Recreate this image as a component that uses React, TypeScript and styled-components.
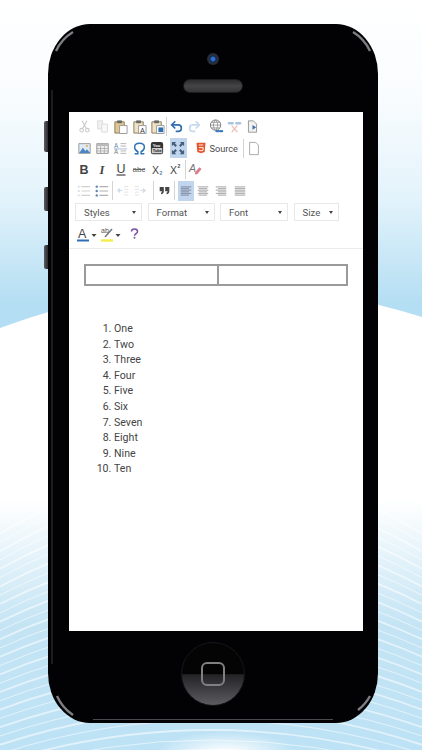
import { FC, ReactNode } from 'react';
import styled, { createGlobalStyle } from 'styled-components';

const GlobalStyle = createGlobalStyle`
  html, body { margin: 0; padding: 0; width: 422px; height: 750px; overflow: hidden; background: #fff; }
  * { box-sizing: border-box; }
`;

const Page = styled.div`
  position: relative;
  width: 422px;
  height: 750px;
  overflow: hidden;
  padding: 24px 44px 27px 48px;
  font-family: Roboto, 'Liberation Sans', sans-serif;
`;

const Backdrop = styled.svg`
  position: absolute;
  inset: 0;
`;

const Phone = styled.div`
  position: relative;
  height: 699px;
  background: #020204;
  border-radius: 42px / 50px;
  padding: 0 15px 0 21px;
  display: flex;
  flex-direction: column;
`;

const Trim = styled.svg`
  position: absolute;
  inset: 0;
  pointer-events: none;
`;

const SideKey = styled.div<{ $top: number; $height: number }>`
  position: absolute;
  left: -4px;
  top: ${({ $top }) => $top}px;
  width: 4px;
  height: ${({ $height }) => $height}px;
  background: linear-gradient(90deg, #5a5b5f, #2a2a2e);
  border-radius: 2px 0 0 2px;
`;

const TopBezel = styled.div`
  height: 88px;
  flex: none;
  display: flex;
  flex-direction: column;
  align-items: center;
  padding: 29px 6px 0 0;
  gap: 14px;
`;

const Camera = styled.div`
  width: 12px;
  height: 12px;
  border-radius: 50%;
  background: radial-gradient(circle, #2f6fd0 0 20%, #123058 34%, #2b2d33 58%, #1c1d21 100%);
`;

const Speaker = styled.div`
  width: 60px;
  height: 14px;
  border-radius: 7px;
  background: linear-gradient(180deg, #2c2c2e, #454548 50%, #343437);
  border: 1px solid #1d1d1f;
`;

const Screen = styled.div`
  height: 519px;
  flex: none;
  background: #fff;
  display: flex;
  flex-direction: column;
`;

const Toolbar = styled.div`
  height: 137px;
  flex: none;
  padding: 4px 6px 0;
  border-bottom: 1px solid #ececec;
  display: flex;
  flex-direction: column;
`;

const Row = styled.div`
  height: 21.4px;
  flex: none;
  display: flex;
  align-items: center;
`;

const Tool = styled.div<{ $active?: boolean; $w?: number; $ml?: number; $dim?: boolean }>`
  width: ${({ $w }) => $w ?? 18.3}px;
  height: 20px;
  margin-left: ${({ $ml }) => $ml ?? 0}px;
  flex: none;
  display: flex;
  align-items: center;
  justify-content: center;
  background: ${({ $active }) => ($active ? '#c2d5ef' : 'transparent')};
  opacity: ${({ $dim }) => ($dim ? 0.38 : 1)};
`;

const Sep = styled.div<{ $ml?: number }>`
  width: 1px;
  height: 19px;
  margin-left: ${({ $ml }) => $ml ?? 0}px;
  flex: none;
  background: #d4d4d4;
`;

const SourceButton = styled.div`
  display: flex;
  align-items: center;
  gap: 2px;
  margin-left: 8.5px;
  flex: none;
`;

const SourceLabel = styled.span`
  font-size: 9.2px;
  color: #4a4a4a;
`;

const SelectRow = styled.div`
  height: 21.4px;
  flex: none;
  display: flex;
  align-items: center;
  gap: 5.5px;
`;

const SelectBox = styled.div<{ $w: number }>`
  width: ${({ $w }) => $w}px;
  height: 18px;
  flex: none;
  border: 1px solid #e8e8e8;
  display: flex;
  align-items: center;
  justify-content: space-between;
  padding: 0 5px 0 8px;
  font-size: 9.6px;
  color: #555;
`;

const Caret = styled.span`
  width: 0;
  height: 0;
  border-left: 2.5px solid transparent;
  border-right: 2.5px solid transparent;
  border-top: 3px solid #444;
`;

const EditorBody = styled.div`
  flex: 1;
  padding: 15px 15px 0 15px;
  color: #444;
  font-size: 10.6px;
`;

const EmptyTable = styled.div`
  height: 22px;
  display: grid;
  grid-template-columns: 131px 1fr;
  border: 2px solid #9a9a9a;
  background: #fff;
`;

const EmptyCell = styled.div`
  & + & {
    border-left: 2px solid #9a9a9a;
  }
`;

const NumberedList = styled.ol`
  margin: 35px 0 0;
  padding: 0 0 0 30px;
  list-style: decimal;
  line-height: 15.6px;
`;

const BottomBezel = styled.div`
  flex: 1;
  display: flex;
  align-items: center;
  justify-content: center;
  padding: 0 6px 7px 0;
`;

const HomeButton = styled.div`
  width: 64px;
  height: 64px;
  border-radius: 50%;
  border: 1px solid #161618;
  background: linear-gradient(180deg, #040405 0 50%, #232326 51%, #5c5c61 100%);
  display: flex;
  align-items: center;
  justify-content: center;
`;

const HomeSquare = styled.div`
  width: 24px;
  height: 24px;
  border-radius: 6px;
  border: 2px solid #808083;
`;

const Icon: FC<{ children: ReactNode; size?: number }> = ({ children, size = 13 }) => (
  <svg width={size} height={size} viewBox="0 0 16 16" fill="none">
    {children}
  </svg>
);

const Cut = () => (
  <Icon>
    <path d="M5 1l5 9M11 1L6 10" stroke="#777" strokeWidth="1.3" />
    <circle cx="4.5" cy="12.5" r="2.2" stroke="#777" strokeWidth="1.3" />
    <circle cx="11.5" cy="12.5" r="2.2" stroke="#777" strokeWidth="1.3" />
  </Icon>
);
const Copy = () => (
  <Icon>
    <path d="M2 1h6v10H2z" fill="#ddd" stroke="#999" />
    <path d="M7 5h7v10H7z" fill="#eee" stroke="#999" />
  </Icon>
);
const Board: FC<{ fill?: string; mark?: ReactNode }> = ({ fill = '#e2c68f', mark }) => (
  <Icon size={15}>
    <path d="M2 3h10v12H2z" fill={fill} stroke="#8a7a5c" />
    <path d="M4.5 1.5h5v3h-5z" fill="#666" />
    <path d="M7 7h8v8.5H7z" fill="#fff" stroke="#999" />
    {mark}
  </Icon>
);
const Undo: FC<{ color: string; flip?: boolean }> = ({ color, flip }) => (
  <Icon>
    <g transform={flip ? 'matrix(-1 0 0 1 16 0)' : undefined}>
      <path d="M3 6h7a3.6 3.6 0 0 1 0 8H7" stroke={color} strokeWidth="2" />
      <path d="M6.5 1.5L2 6l4.5 4.5" stroke={color} strokeWidth="2" />
    </g>
  </Icon>
);
const Globe = () => (
  <Icon size={15}>
    <circle cx="7" cy="6.5" r="5.5" stroke="#777" />
    <path d="M1.5 6.5h11M7 1c-3 3-3 8 0 11M7 1c3 3 3 8 0 11M2.5 3.5h9M2.5 9.5h9" stroke="#777" strokeWidth=".7" />
    <path d="M8 13h2M12 13h2" stroke="#3f7cc0" strokeWidth="2.4" strokeLinecap="round" />
  </Icon>
);
const Unlink = () => (
  <Icon size={15}>
    <path d="M2 4.5h4M10 4.5h4" stroke="#a9c4de" strokeWidth="2.6" strokeLinecap="round" />
    <path d="M5 7l6 7M11 7l-6 7" stroke="#edbdb3" strokeWidth="1.3" />
  </Icon>
);
const Anchor = () => (
  <Icon>
    <path d="M3 1h6l4 4v10H3z" fill="#f2f2f2" stroke="#888" />
    <path d="M8 6l4.5 3L8 12z" fill="#3f6fa8" />
  </Icon>
);
const Picture = () => (
  <Icon>
    <path d="M1 2h14v12H1z" fill="#dfeaf5" stroke="#8a8a8a" />
    <path d="M1.5 13.5L6 7l3 4 2-2 4 4.5z" fill="#4a86c4" />
    <circle cx="11" cy="5" r="1.3" fill="#e3b341" />
  </Icon>
);
const TableIcon = () => (
  <Icon>
    <path d="M1 2h14v12H1z" fill="#f2f2f2" stroke="#808080" />
    <path d="M1 2h14v3H1z" fill="#bbb" />
    <path d="M1 8h14M1 11h14M5.6 5v9M10.3 5v9" stroke="#9a9a9a" strokeWidth=".8" />
  </Icon>
);
const FindReplace = () => (
  <Icon>
    <text x="0" y="7" fontSize="8" fill="#5d85b5" fontFamily="Roboto, sans-serif">A</text>
    <text x="0" y="15" fontSize="8" fill="#777" fontFamily="Roboto, sans-serif">A</text>
    <path d="M8 2h7M8 5h7M8 11h7M8 14h7" stroke="#a5a5a5" />
    <path d="M0 8.5h16" stroke="#8fb0d2" />
  </Icon>
);
const Omega = () => (
  <Icon size={13}>
    <path d="M2 14.5h4V12C3.5 10.8 2 8.700 2 6.400 2 3.400 4.600 1.600 8 1.600s6 1.800 6 4.800c0 2.300-1.500 4.400-4 5.600v2.500h4" stroke="#2f73b4" strokeWidth="1.8" />
  </Icon>
);
const Youtube = () => (
  <Icon size={14}>
    <rect x="1" y="1" width="14" height="14" rx="2.5" fill="#333" />
    <text x="3" y="6.6" fontSize="5" fill="#eee" fontWeight="700" fontFamily="Roboto, sans-serif">You</text>
    <rect x="2" y="8" width="12" height="6" rx="1" fill="#ccc" />
    <text x="3" y="13" fontSize="4.6" fill="#333" fontWeight="700" fontFamily="Roboto, sans-serif">Tube</text>
  </Icon>
);
const Maximize = () => (
  <Icon size={14}>
    <path d="M1 1h5L4.4 2.600 6.800 5 5 6.800 2.600 4.400 1 6zM15 1v5l-1.600-1.600L11 6.800 9.200 5l2.400-2.400L10 1zM1 15v-5l1.600 1.600L5 9.200 6.800 11l-2.400 2.400L6 15zM15 15h-5l1.600-1.600L9.200 11 11 9.200l2.400 2.400L15 10z" fill="#46607c" />
  </Icon>
);
const Html5 = () => (
  <Icon size={12}>
    <path d="M2 1h12l-1.100 12.400L8 15l-4.900-1.600z" fill="#e4572e" />
    <path d="M5 4h6M5.200 7.500H11l-.3 3.400-2.700.9-2.700-.9" stroke="#fff" strokeWidth="1.2" />
  </Icon>
);
const BlankPage = () => (
  <Icon size={15}>
    <path d="M3 1h7l3 3v11H3z" fill="#fff" stroke="#a0a0a0" />
  </Icon>
);
const Letter: FC<{ c: string; serif?: boolean; weight?: number; italic?: boolean; underline?: boolean }> = ({ c, serif, weight = 500, italic, underline }) => (
  <svg width="14" height="14" viewBox="0 0 14 14">
    <text
      x="7"
      y={underline ? 11 : 11.5}
      textAnchor="middle"
      fontSize="12.5"
      fontWeight={weight}
      fontStyle={italic ? 'italic' : 'normal'}
      fontFamily={serif ? "'Liberation Serif', serif" : "'Liberation Sans', sans-serif"}
      fill="#444"
    >
      {c}
    </text>
    {underline && <path d="M2.5 13h9" stroke="#444" strokeWidth="1.2" />}
  </svg>
);
const Strike = () => (
  <svg width="14" height="14" viewBox="0 0 14 14">
    <text x="7" y="10" textAnchor="middle" fontSize="8" fontFamily="'Liberation Sans', sans-serif" fill="#666">abc</text>
    <path d="M1 7.5h12" stroke="#666" />
  </svg>
);
const Script: FC<{ up?: boolean }> = ({ up }) => (
  <svg width="13" height="14" viewBox="0 0 13 14">
    <text x="1" y="11.5" fontSize="10.5" fontFamily="'Liberation Sans', sans-serif" fill="#444">X</text>
    <text x="8.5" y={up ? 5.5 : 13} fontSize="5" fontWeight="700" fontFamily="'Liberation Sans', sans-serif" fill={up ? '#444' : '#5d7ea6'}>2</text>
  </svg>
);
const RemoveFormat = () => (
  <Icon size={14}>
    <text x="1" y="11" fontSize="12" fill="#777" fontStyle="italic" fontFamily="'Liberation Sans', sans-serif">A</text>
    <path d="M8 12l5-6 2.5 2-5 6H8z" fill="#dc7a8a" />
  </Icon>
);
const NumList = () => (
  <Icon size={14}>
    <path d="M1 3h2M1 8h2M1 13h2" stroke="#6c8db0" strokeWidth="1.6" />
    <path d="M5 3h10M5 8h10M5 13h10" stroke="#888" strokeWidth="1.2" />
  </Icon>
);
const BulList = () => (
  <Icon size={14}>
    <circle cx="2" cy="3" r="1.4" fill="#5f88b0" />
    <circle cx="2" cy="8" r="1.4" fill="#5f88b0" />
    <circle cx="2" cy="13" r="1.4" fill="#5f88b0" />
    <path d="M5 3h10M5 8h10M5 13h10" stroke="#b0b0b0" strokeWidth="1.2" />
  </Icon>
);
const Indent: FC<{ flip?: boolean }> = ({ flip }) => (
  <Icon>
    <g transform={flip ? 'matrix(-1 0 0 1 16 0)' : undefined}>
      <path d="M1 8l4-3.5v7z" fill="#8fa9c6" />
      <path d="M5 8h3" stroke="#8fa9c6" strokeWidth="1.5" />
      <path d="M10 3h5M10 6.500h5M10 10h5M10 13.500h5" stroke="#aaa" />
    </g>
  </Icon>
);
const Quote = () => (
  <Icon size={11}>
    <path d="M1 3h6v6c0 2.500-1.500 4-4 4.500V11c1 0 1.500-.7 1.500-2H1zM9 3h6v6c0 2.500-1.500 4-4 4.500V11c1 0 1.500-.7 1.500-2H9z" fill="#444" />
  </Icon>
);

type AlignKind = 'left' | 'center' | 'right' | 'justify';

const Align: FC<{ kind: AlignKind; color?: string }> = ({ kind, color = '#b4b4b4' }) => {
  const lines = [0, 1, 2, 3, 4, 5];
  return (
    <Icon size={12}>
      {lines.map((l) => {
        const short = l % 2 === 1 ? 11 : 14;
        const w = kind === 'justify' ? 14 : short;
        const x = kind === 'left' || kind === 'justify' ? 1 : kind === 'right' ? 15 - w : 8 - w / 2;
        return <path key={l} d={`M${x} ${2.5 + l * 2.2}h${w}`} stroke={color} strokeWidth="1.6" />;
      })}
    </Icon>
  );
};
const TextColor = () => (
  <svg width="21" height="16" viewBox="0 0 21 16">
    <text x="1" y="11.5" fontSize="12.5" fontFamily="'Liberation Sans', sans-serif" fill="#444">A</text>
    <path d="M0 14.5h12" stroke="#2f6db5" strokeWidth="2" />
    <path d="M14.5 8h5l-2.500 3z" fill="#444" />
  </svg>
);
const BgColor = () => (
  <svg width="21" height="16" viewBox="0 0 21 16">
    <text x="0" y="7" fontSize="7" fontFamily="'Liberation Sans', sans-serif" fill="#555">ab</text>
    <path d="M4 11l7-8" stroke="#777" strokeWidth="1.5" />
    <path d="M0 14.5h12" stroke="#f5ee4a" strokeWidth="2.4" />
    <path d="M14.5 8h5l-2.500 3z" fill="#444" />
  </svg>
);
const Help = () => (
  <svg width="9" height="13" viewBox="0 0 12 14">
    <path d="M2 4.200C2 2 3.800 1 6 1s4 1.200 4 3.200C10 7 6 7.200 6 10" stroke="#7b52ab" strokeWidth="2" fill="none" />
    <circle cx="6" cy="12.6" r="1.3" fill="#7b52ab" />
  </svg>
);

const Select: FC<{ label: string; w: number }> = ({ label, w }) => (
  <SelectBox $w={w}>
    {label}
    <Caret />
  </SelectBox>
);

const items = ['One', 'Two', 'Three', 'Four', 'Five', 'Six', 'Seven', 'Eight', 'Nine', 'Ten'];
const waves = Array.from({ length: 30 }, (_, i) => 470 + i * 10);

export default function App() {
  return (
    <>
      <GlobalStyle />
      <Page>
        <Backdrop width="422" height="750" viewBox="0 0 422 750">
          <defs>
            <linearGradient id="sky" gradientUnits="userSpaceOnUse" x1="0" y1="0" x2="0" y2="320">
              <stop offset="0" stopColor="#ffffff" />
              <stop offset="0.3" stopColor="#f9fcfe" />
              <stop offset="0.62" stopColor="#e3f3fb" />
              <stop offset="0.95" stopColor="#b4def3" />
            </linearGradient>
            <linearGradient id="floor" gradientUnits="userSpaceOnUse" x1="0" y1="500" x2="0" y2="750">
              <stop offset="0" stopColor="#ffffff" />
              <stop offset="0.5" stopColor="#c4e4f4" />
              <stop offset="1" stopColor="#bde2f5" />
            </linearGradient>
            <radialGradient id="glow" cx="0.5" cy="0.5" r="0.5">
              <stop offset="0" stopColor="#ffffff" />
              <stop offset="1" stopColor="#ffffff" stopOpacity="0" />
            </radialGradient>
          </defs>
          <rect width="422" height="750" fill="#fff" />
          <path d="M0 0H422V317Q211 250 0 328Z" fill="url(#sky)" />
          <rect y="500" width="422" height="250" fill="url(#floor)" />
          {waves.map((y, i) => {
            const k = 30 + (750 - y) * 0.12;
            return (
              <path
                key={y}
                d={`M0 ${y + k}Q211 ${y - k} 422 ${y + k}`}
                stroke="#fff"
                strokeWidth={i % 2 ? 1 : 1.8}
                opacity={0.55}
                fill="none"
              />
            );
          })}
          <ellipse cx="226" cy="752" rx="70" ry="20" fill="url(#glow)" />
        </Backdrop>

        <Phone>
          <SideKey $top={97} $height={31} />
          <SideKey $top={163} $height={24} />
          <SideKey $top={221} $height={24} />
          <Trim width="330" height="699" viewBox="0 0 330 699">
            <path d="M8 27A44 44 0 0 1 25 8M322 27A44 44 0 0 0 305 8M9 672A44 44 0 0 0 25 691M322 672A44 44 0 0 1 310 686" stroke="#7e7f83" strokeWidth="2.4" fill="none" />
            <path d="M45 695.5H285" stroke="#4a4a4e" strokeWidth="1" />
            <path d="M4 66V640" stroke="#37373b" strokeWidth="1" />
          </Trim>

          <TopBezel>
            <Camera />
            <Speaker />
          </TopBezel>

          <Screen>
            <Toolbar>
              <Row>
                <Tool $dim><Cut /></Tool>
                <Tool $dim><Copy /></Tool>
                <Tool><Board /></Tool>
                <Tool><Board fill="#f0e2c4" mark={<text x="8.5" y="14.5" fontSize="8" fill="#333" fontFamily="Roboto, sans-serif">A</text>} /></Tool>
                <Tool><Board fill="#f0e2c4" mark={<path d="M9 9h5v5H9z" fill="#2f6db5" />} /></Tool>
                <Sep />
                <Tool $w={18}><Undo color="#2f6db5" /></Tool>
                <Tool $w={18} $dim><Undo color="#6f9ccc" flip /></Tool>
                <Tool $w={18} $ml={4.5}><Globe /></Tool>
                <Tool $w={18}><Unlink /></Tool>
                <Tool $w={18}><Anchor /></Tool>
              </Row>
              <Row>
                <Tool><Picture /></Tool>
                <Tool><TableIcon /></Tool>
                <Tool><FindReplace /></Tool>
                <Tool><Omega /></Tool>
                <Tool><Youtube /></Tool>
                <Tool $active $w={17} $ml={3.5}><Maximize /></Tool>
                <SourceButton>
                  <Html5 />
                  <SourceLabel>Source</SourceLabel>
                </SourceButton>
                <Sep $ml={5} />
                <Tool $w={14} $ml={3}><BlankPage /></Tool>
              </Row>
              <Row>
                <Tool><Letter c="B" weight={700} /></Tool>
                <Tool><Letter c="I" serif weight={700} italic /></Tool>
                <Tool><Letter c="U" underline /></Tool>
                <Tool><Strike /></Tool>
                <Tool><Script /></Tool>
                <Tool><Script up /></Tool>
                <Sep />
                <Tool $w={18}><RemoveFormat /></Tool>
              </Row>
              <Row>
                <Tool $dim><NumList /></Tool>
                <Tool><BulList /></Tool>
                <Sep />
                <Tool $dim $w={18} $ml={1.4}><Indent /></Tool>
                <Tool $dim $w={18}><Indent flip /></Tool>
                <Sep $ml={3} />
                <Tool $w={18} $ml={2}><Quote /></Tool>
                <Sep />
                <Tool $active $w={16} $ml={3}><Align kind="left" color="#8a97a8" /></Tool>
                <Tool><Align kind="center" /></Tool>
                <Tool><Align kind="right" /></Tool>
                <Tool><Align kind="justify" /></Tool>
              </Row>
              <SelectRow>
                <Select label="Styles" w={67} />
                <Select label="Format" w={67} />
                <Select label="Font" w={68} />
                <Select label="Size" w={45} />
              </SelectRow>
              <Row>
                <Tool $w={24}><TextColor /></Tool>
                <Tool $w={24}><BgColor /></Tool>
                <Tool $w={22}><Help /></Tool>
              </Row>
            </Toolbar>
            <EditorBody>
              <EmptyTable>
                <EmptyCell />
                <EmptyCell />
              </EmptyTable>
              <NumberedList>
                {items.map((item) => (
                  <li key={item}>{item}</li>
                ))}
              </NumberedList>
            </EditorBody>
          </Screen>

          <BottomBezel>
            <HomeButton>
              <HomeSquare />
            </HomeButton>
          </BottomBezel>
        </Phone>
      </Page>
    </>
  );
}
